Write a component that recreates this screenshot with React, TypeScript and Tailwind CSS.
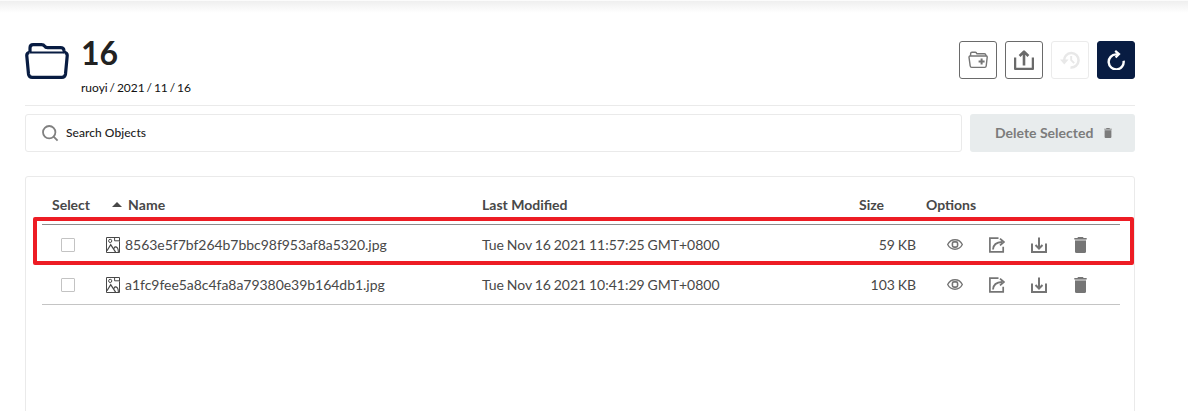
import React from "react";

type IconProps = { className?: string };

const FolderIcon = ({ className }: IconProps) => (
  <svg className={className} viewBox="0 0 44 38" fill="none" stroke="currentColor" strokeWidth="3.2" strokeLinejoin="round">
    <path d="M5 10.5V6Q5 2.6 8.2 2.6H16.5Q18.6 2.6 19.6 4.2Q20.5 5.7 22.5 5.7H35.5Q38.6 5.7 39 8.5L39.6 11" />
    <path d="M4.5 10.5H39.5" strokeWidth="2" />
    <path d="M4.2 10.5Q1.5 11 1.8 14L3.5 32Q3.9 35.4 7.2 35.4H36.8Q40.1 35.4 40.5 32L42.2 14Q42.5 11 39.8 10.5" />
  </svg>
);

const FolderPlusIcon = ({ className }: IconProps) => (
  <svg className={className} viewBox="0 0 20 18" fill="none" stroke="currentColor" strokeWidth="1.4" strokeLinejoin="round">
    <path d="M2.6 5V2.5Q2.7 1.3 4 1.3H7.3Q8.4 1.4 8.8 2.7H16.3Q17.7 2.8 17.9 4L18 5" />
    <path d="M1.8 5H18.4Q19.3 5.2 19.2 6.2L18.2 15Q18 16.4 16.8 16.4H3.7Q2.4 16.4 2.2 15L1 6.2Q1 5.2 1.8 5Z" />
    <path d="M13.6 7.5V13.5M10.6 10.5H16.6" strokeWidth="2" />
  </svg>
);

const UploadIcon = ({ className }: IconProps) => (
  <svg className={className} viewBox="0 0 20 20" fill="none" stroke="currentColor" strokeLinejoin="round">
    <path d="M1.1 7.5V18.8H18.9V7.5" strokeWidth="2.3" />
    <path d="M10 15.5V2M5.6 6L10 1.6L14.4 6" strokeWidth="2.6" />
  </svg>
);

const HistoryIcon = ({ className }: IconProps) => (
  <svg className={className} viewBox="0 0 20 18" fill="none" stroke="currentColor" strokeWidth="2">
    <path d="M4.2 10A7.2 7.2 0 1 1 10.5 16.4" strokeWidth="2.5" />
    <path d="M0 8.6H8.6L4.3 13.4Z" fill="currentColor" stroke="none" />
    <path d="M11.2 5V9.2L14.2 12.2" strokeWidth="1.9" />
  </svg>
);

const RefreshIcon = ({ className }: IconProps) => (
  <svg className={className} viewBox="0 0 18 20" fill="none" stroke="currentColor" strokeWidth="2.4">
    <path d="M16.6 10.8A7.5 7.5 0 1 1 9 4.4H11" />
    <path d="M8.2 0.8L12 4.1L8.6 7.6" strokeWidth="2.2" />
  </svg>
);

const SearchIcon = ({ className }: IconProps) => (
  <svg className={className} viewBox="0 0 17 17" fill="none" stroke="currentColor" strokeWidth="1.8">
    <circle cx="7.2" cy="7.2" r="6.2" />
    <path d="M11.6 11.6L15.6 15.6" />
  </svg>
);

const TrashIcon = ({ className }: IconProps) => (
  <svg className={className} viewBox="0 0 13 16" fill="currentColor">
    <path d="M3.7 0H9.3V0.9H12.7V2.4H0.3V0.9H3.7Z" />
    <path d="M1 3.5H12V14.5Q12 16 10.5 16H2.5Q1 16 1 14.5Z" />
    <path d="M1 2.4H12V3.5H1Z" opacity="0.35" />
  </svg>
);

const ImageIcon = ({ className }: IconProps) => (
  <svg className={className} viewBox="0 0 14 16" fill="none" stroke="currentColor" strokeWidth="1">
    <path d="M9 0.5H0.5V15.5H13.5V4.5M9 0.5H13.5V4.5M8.6 0.5V3.8H13.5" />
    <circle cx="4.2" cy="3.9" r="1.6" />
    <path d="M1 13.8L4.7 7.7L9.6 15.2M7.6 12L9 9.8" strokeWidth="1.2" />
    <path d="M8.8 9.9Q12.2 9.4 12.4 15" strokeWidth="1.1" />
  </svg>
);

const EyeIcon = ({ className }: IconProps) => (
  <svg className={className} viewBox="0 0 16 11" fill="none" stroke="currentColor" strokeWidth="1.4">
    <path d="M0.7 5.5C3.8 -0.8 12.2 -0.8 15.3 5.5C12.2 11.8 3.8 11.8 0.7 5.5Z" />
    <rect x="5.4" y="2.9" width="5.2" height="5.2" rx="1.6" strokeWidth="1.6" />
  </svg>
);

const ShareIcon = ({ className }: IconProps) => (
  <svg className={className} viewBox="0 0 16 16" fill="none" stroke="currentColor" strokeWidth="1.7">
    <path d="M9.5 1.2H0.9V14.8H14.2V9.8" />
    <path d="M4 12.5C4.3 8 7.2 5.2 13 5" strokeWidth="1.8" />
    <path d="M11 1.6L14.8 5L11 8.4" strokeWidth="1.8" />
  </svg>
);

const DownloadIcon = ({ className }: IconProps) => (
  <svg className={className} viewBox="0 0 16 16" fill="none" stroke="currentColor" strokeWidth="2">
    <path d="M1 6.5V14.9H15V6.5M8 0.5V11.5M4.5 8L8 11.5L11.5 8" />
  </svg>
);

const rows = [
  { name: "8563e5f7bf264b7bbc98f953af8a5320.jpg", modified: "Tue Nov 16 2021 11:57:25 GMT+0800", size: "59 KB" },
  { name: "a1fc9fee5a8c4fa8a79380e39b164db1.jpg", modified: "Tue Nov 16 2021 10:41:29 GMT+0800", size: "103 KB" },
];

const columns = "grid grid-cols-[60px_380px_360px_74px_204px]";
const actionButton = "flex h-[38px] w-[38px] items-center justify-center rounded-[3px] border";

export default function App() {
  return (
    <div className="h-[411px] overflow-hidden bg-white font-['Lato',sans-serif] text-[#393939]">
      <div className="h-px bg-[#fbfbfb]" />
      <div className="h-[12px] bg-linear-to-b from-[#efefef] to-white" />
      <main className="ml-[25px] flex w-[1110px] flex-col">
        <header className="flex h-[93px] items-start border-b border-[#eaeaea] pt-[28px]">
          <FolderIcon className="mt-px h-[38px] w-[44px] text-[#081c42]" />
          <div className="ml-3 flex flex-col">
            <h1 className="-mt-[8px] h-[40px] text-[32px] leading-[40px] font-bold text-[#222222]">16</h1>
            <p className="mt-[7px] text-[12px] leading-[16px] [word-spacing:-1.2px] text-[#111111]">ruoyi / 2021 / 11 / 16</p>
          </div>
          <div className="ml-auto flex gap-2">
            <button className={`${actionButton} border-[#6a6a6a] text-[#757575]`}>
              <FolderPlusIcon className="h-[18px] w-[20px]" />
            </button>
            <button className={`${actionButton} border-[#6a6a6a] text-[#6a6a6a]`}>
              <UploadIcon className="h-[20px] w-[20px]" />
            </button>
            <button className={`${actionButton} border-[#ebebeb] text-[#e8e8e8]`}>
              <HistoryIcon className="h-[18px] w-[20px]" />
            </button>
            <button className={`${actionButton} border-[#081c42] bg-[#081c42] text-white`}>
              <RefreshIcon className="h-[20px] w-[18px]" />
            </button>
          </div>
        </header>

        <div className="mt-2 flex h-[38px] gap-2">
          <div className="flex w-[937px] items-center rounded-[3px] border border-[#eaeaea] pl-4">
            <SearchIcon className="h-[17px] w-[17px] text-[#808080]" />
            <span className="ml-[7px] text-[12px] font-medium tracking-[0.05px] text-[#222222]">Search Objects</span>
          </div>
          <button className="flex flex-1 items-center rounded-[3px] bg-[#e8eced] pl-[25px] text-[14px] font-bold text-[#7c7c7c]">
            <span className="-mt-0.5">Delete Selected</span>
            <TrashIcon className="ml-[11px] h-[10px] w-[8px]" />
          </button>
        </div>

        <section className="mt-6 h-[260px] rounded-[3px] border border-[#eaeaea] px-4 pt-[9px]">
          <div className="relative w-[1078px] text-[14px]">
            <div className={`${columns} h-[39px] items-center border-b border-[#8c8c8c] pb-[2px] font-bold text-[#484848]`}>
              <span className="pl-[10px]">Select</span>
              <span className="flex items-center pl-[10px]">
                <svg className="mr-[6px] h-[5px] w-[10px]" viewBox="0 0 10 5" fill="currentColor">
                  <path d="M0 5L5 0L10 5Z" />
                </svg>
                <span className="tracking-[0.1px]">Name</span>
              </span>
              <span>Last Modified</span>
              <span className="pl-[17px]">Size</span>
              <span className="pl-[10px]">Options</span>
            </div>
            {rows.map((row, index) => (
              <div key={row.name} className={index === 1 ? "border-b border-[#c4c4c4]" : "pb-px"}>
                <div className={`${columns} h-[39px] items-center text-[#484848]`}>
                  <span className="ml-[19px] h-[14px] w-[14px] rounded-[1px] border border-[#c3c3c3]" />
                  <span className="flex items-center pl-1 tracking-[-0.035px]">
                    <ImageIcon className="mr-[5px] h-[16px] w-[14px]" />
                    {row.name}
                  </span>
                  <span className="[word-spacing:-0.8px]">{row.modified}</span>
                  <span className="text-right [word-spacing:-0.8px]">{row.size}</span>
                  <span className="flex items-center pl-[31px] text-[#757575]">
                    <EyeIcon className="h-[11px] w-[16px]" />
                    <ShareIcon className="ml-[26px] h-[16px] w-[16px]" />
                    <DownloadIcon className="ml-[26px] h-[16px] w-[16px]" />
                    <TrashIcon className="ml-[27px] h-[16px] w-[13px]" />
                  </span>
                </div>
              </div>
            ))}
            <div className="pointer-events-none absolute -top-px left-0 mt-[32px] -ml-[9px] h-[48px] w-[1101px] rounded-[2px] border-4 border-[#ed1c24]" />
          </div>
        </section>
      </main>
    </div>
  );
}
